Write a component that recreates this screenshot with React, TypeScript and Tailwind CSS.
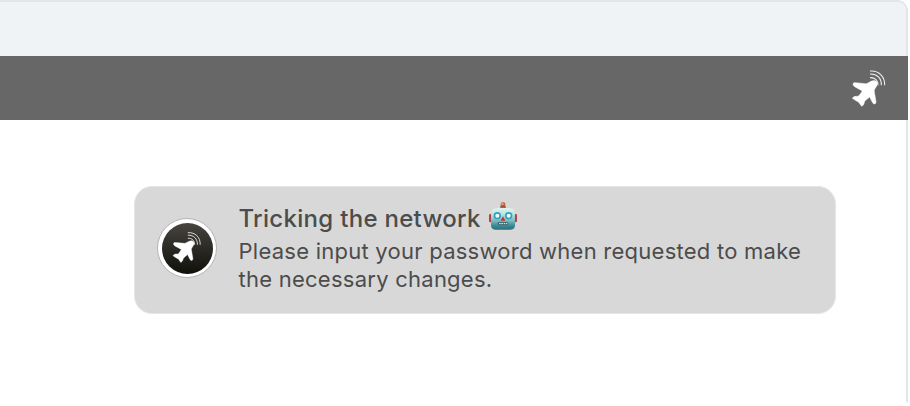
function PlaneIcon({ className }: { className: string }) {
  return (
    <svg viewBox="0 0 102 114" className={className} fill="none">
      <path
        d="M3 46 Q3 40 10 41 L41 44 Q45 44 48 42 L57 37 Q68 32 74 38 Q79 45 72 54 L68 61 Q66 64 67 69 L72 98 Q72 106 66 105 Q63 104 61 100 L53 84 L41 94 Q37 97 37 101 Q36 108 29 112 L21 101 Q19 98 15 97 L1 88 Q5 81 12 82 Q19 83 22 79 L31 66 L8 53 Q3 50 3 46 Z"
        fill="white"
        stroke="white"
        strokeWidth="1.5"
        strokeLinejoin="round"
      />
      <path
        d="M54 6 C80 4 99 22 98 49 M54 15 C75 14 89 28 88 49 M54 26 C69 25 79 35 78 49"
        stroke="white"
        strokeWidth="3.2"
        strokeOpacity=".9"
      />
    </svg>
  );
}

function Robot() {
  return (
    <svg viewBox="0 0 84 84" className="-mt-[6px] h-7 w-7" fill="none">
      <defs>
        <linearGradient id="face" x1="0" y1="0" x2="0" y2="1">
          <stop stopColor="#e2f5f2" />
          <stop offset=".3" stopColor="#b9e2e0" />
          <stop offset=".62" stopColor="#76b3b9" />
          <stop offset=".82" stopColor="#388995" />
          <stop offset="1" stopColor="#28717c" />
        </linearGradient>
      </defs>
      <rect x="35" y="1" width="14" height="17" rx="5" fill="#cf5935" />
      <rect x="37" y="3" width="7" height="6" rx="3" fill="#f7a85c" />
      <rect x="34" y="13" width="16" height="5" fill="#69514d" />
      <rect x="0" y="36" width="9" height="25" rx="4" fill="#b83e40" />
      <rect x="75" y="36" width="9" height="25" rx="4" fill="#b83e40" />
      <path d="M14 20 Q42 15 70 20 Q78 23 78 32 V69 Q78 83 65 83 H19 Q6 83 6 69 V32 Q6 23 14 20Z" fill="url(#face)" />
      <circle cx="25" cy="41" r="11" fill="#35a0bd" />
      <circle cx="59" cy="41" r="11" fill="#35a0bd" />
      <circle cx="25" cy="41" r="6" fill="#e9ffff" />
      <circle cx="59" cy="41" r="6" fill="#e9ffff" />
      <path d="M42 43 L49 56 H35Z" fill="#b8372f" />
      <rect x="26" y="61" width="32" height="8" rx="4" fill="#315c65" />
      <path d="M30 65 H55" stroke="#d8e2df" strokeWidth="4" strokeDasharray="5 2" />
    </svg>
  );
}

export default function App() {
  return (
    <div className="h-[406px] w-[910px] overflow-hidden bg-white font-['Inter','Noto_Sans',sans-serif]">
      <div className="h-[403px] w-[908px] rounded-tr-[11px] border-t-2 border-r-2 border-b-2 border-[#e1e6e9] border-b-white bg-white">
        <div className="h-[54px] rounded-tr-lg bg-[#eff3f6]" />
        <div className="-mr-0.5 flex h-16 justify-end bg-[#676767] pt-[13px] pr-[22px]">
          <PlaneIcon className="h-[38px] w-[34px]" />
        </div>
        <div className="mt-[66px] ml-[134px] flex h-32 w-[702px] rounded-[18px] border border-[#e6e6e6] bg-[#d8d8d8] pl-[22px] text-[#4c4c4c]">
          <div className="mt-[31px] flex h-[60px] w-[60px] shrink-0 items-center justify-center rounded-full border border-[#b4b4b4] bg-white">
            <div className="flex h-[51px] w-[51px] items-center justify-center rounded-full bg-linear-to-b from-[#48453f] to-[#11110c] pr-[1px] pb-[2px]">
              <PlaneIcon className="h-[32px] w-[30px]" />
            </div>
          </div>
          <div className="ml-[21.5px] pt-[15px]">
            <div className="flex h-[34px] items-center text-2xl font-medium tracking-[0.3px]">
              <span className="w-[250.5px] whitespace-nowrap">Tricking the network</span>
              <Robot />
            </div>
            <p className="mt-px text-[22px] leading-[28px] tracking-[0.25px] whitespace-nowrap">
              Please input your password when requested to make
              <br />
              the necessary changes.
            </p>
          </div>
        </div>
      </div>
    </div>
  );
}
